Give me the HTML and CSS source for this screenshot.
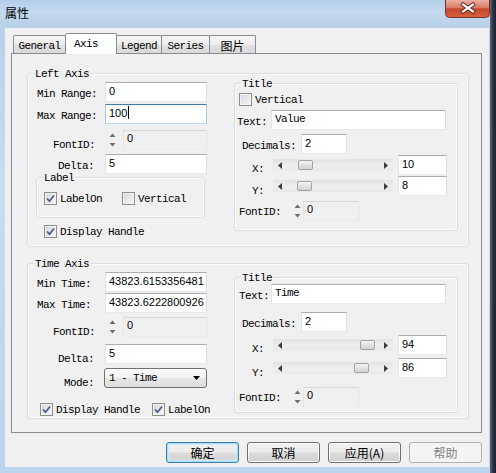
FILE: index.html
```html
<!DOCTYPE html>
<html>
<head>
<meta charset="utf-8">
<title>属性</title>
<link rel="stylesheet" href="styles.css">
</head>
<body>
<div class="screen">
  <div class="window">
    <div class="titlebar">
      <span class="title">属性</span>
      <div class="close">
        <svg width="45" height="18" viewBox="0 0 45 18">
          <defs>
            <linearGradient id="cg" x1="0" y1="0" x2="0" y2="1">
              <stop offset="0" stop-color="#eab0a3"/>
              <stop offset="0.45" stop-color="#d97b63"/>
              <stop offset="0.5" stop-color="#c4482c"/>
              <stop offset="1" stop-color="#d9603f"/>
            </linearGradient>
          </defs>
          <path d="M0.5 0 V13.5 A4 4 0 0 0 4.5 17.5 H40.5 A4 4 0 0 0 44.5 13.5 V0" fill="url(#cg)" stroke="#7a3328"/>
          <path d="M18 4.5 L28 11.5 M28 4.5 L18 11.5" stroke="#5a2018" stroke-width="4" stroke-linecap="square"/>
          <path d="M18 4.5 L28 11.5 M28 4.5 L18 11.5" stroke="#ffffff" stroke-width="2.2" stroke-linecap="square"/>
        </svg>
      </div>
    </div>
    <div class="client">
      <div class="tabs">
        <div class="tab t-general">General</div>
        <div class="tab sel t-axis">Axis</div>
        <div class="tab t-legend">Legend</div>
        <div class="tab t-series">Series</div>
        <div class="tab t-pic cjk">图片</div>
      </div>
      <div class="panel">
        <div class="group g-axis">
          <div class="legend">Left Axis</div>
          <div class="cols">
            <div class="lcol">
              <div class="row mt2"><span class="lb w77 p9">Min Range:</span><span class="edit w102">0</span></div>
              <div class="row mt2"><span class="lb w77 p9">Max Range:</span><span class="edit w102 focus">100<span class="caret"></span></span></div>
              <div class="row mt6"><span class="lb w77 p25 low4">FontID:</span><svg class="spin ml3" width="9" height="20" viewBox="0 0 9 20"><path d="M1.5 7 L4.5 3.5 L7.5 7Z" fill="#6f6f6f"/><path d="M1.5 13 L4.5 16.5 L7.5 13Z" fill="#6f6f6f"/></svg><span class="edit ro w84 ml6">0</span></div>
              <div class="row mt4"><span class="lb w77 p30">Delta:</span><span class="edit w102">5</span></div>
              <div class="group g-label">
                <div class="legend">Label</div>
                <div class="chkrow mt8 ml7">
                  <span class="cb"><svg width="11" height="11" viewBox="0 0 11 11"><path d="M2 5.5 L4.5 8.2 L9 2.5" fill="none" stroke="#4b5f8e" stroke-width="1.8"/></svg></span><span class="ct">LabelOn</span>
                  <span class="cb ml20"></span><span class="ct">Vertical</span>
                </div>
              </div>
              <div class="chkrow mt7 ml16">
                <span class="cb"><svg width="11" height="11" viewBox="0 0 11 11"><path d="M2 5.5 L4.5 8.2 L9 2.5" fill="none" stroke="#4b5f8e" stroke-width="1.8"/></svg></span><span class="ct">Display Handle</span>
              </div>
            </div>
            <div class="group g-title">
              <div class="legend">Title</div>
              <div class="chkrow mt3 ml4"><span class="cb"></span><span class="ct">Vertical</span></div>
              <div class="row mt4"><span class="lb tl p2">Text:</span><span class="edit m w175">Value</span></div>
              <div class="row mt4"><span class="lb dl">Decimals:</span><span class="edit w46">2</span></div>
              <div class="row mt1"><span class="lb xl low3">X:</span>
                <div class="slider"><span class="arr"><svg width="4" height="7" viewBox="0 0 4 7"><path d="M4 0V7L0 3.5Z" fill="#3c3c3c"/></svg></span><span class="thumb" style="margin-left:11px"></span><span class="grow"></span><span class="arr"><svg width="4" height="7" viewBox="0 0 4 7"><path d="M0 0V7L4 3.5Z" fill="#3c3c3c"/></svg></span></div>
                <span class="edit w49 ml5">10</span></div>
              <div class="row mt1"><span class="lb xl low4">Y:</span>
                <div class="slider"><span class="arr"><svg width="4" height="7" viewBox="0 0 4 7"><path d="M4 0V7L0 3.5Z" fill="#3c3c3c"/></svg></span><span class="thumb" style="margin-left:10px"></span><span class="grow"></span><span class="arr"><svg width="4" height="7" viewBox="0 0 4 7"><path d="M0 0V7L4 3.5Z" fill="#3c3c3c"/></svg></span></div>
                <span class="edit w49 ml5">8</span></div>
              <div class="row mt4 h21"><span class="lb fl">FontID:</span><svg class="spin" width="9" height="20" viewBox="0 0 9 20"><path d="M1.5 7 L4.5 3.5 L7.5 7Z" fill="#6f6f6f"/><path d="M1.5 13 L4.5 16.5 L7.5 13Z" fill="#6f6f6f"/></svg><span class="edit ro w56 ml1 h21">0</span></div>
            </div>
          </div>
        </div>

        <div class="group g-time">
          <div class="legend">Time Axis</div>
          <div class="cols">
            <div class="lcol">
              <div class="row mt2"><span class="lb w77 p9">Min Time:</span><span class="edit w102">43823.6153356481</span></div>
              <div class="row mt1"><span class="lb w77 p9">Max Time:</span><span class="edit w102">43823.6222800926</span></div>
              <div class="row mt3 h21"><span class="lb w77 p25 low5">FontID:</span><svg class="spin ml3" width="9" height="20" viewBox="0 0 9 20"><path d="M1.5 7 L4.5 3.5 L7.5 7Z" fill="#6f6f6f"/><path d="M1.5 13 L4.5 16.5 L7.5 13Z" fill="#6f6f6f"/></svg><span class="edit ro w84 ml6 h21">0</span></div>
              <div class="row mt7"><span class="lb w77 p30 low4">Delta:</span><span class="edit w102">5</span></div>
              <div class="row mt4"><span class="lb w77 p36 low4">Mode:</span><div class="select"><span>1 - Time</span><svg width="7" height="4" viewBox="0 0 7 4"><path d="M0 0H7L3.5 4Z" fill="#000"/></svg></div></div>
              <div class="chkrow mt15 ml12">
                <span class="cb"><svg width="11" height="11" viewBox="0 0 11 11"><path d="M2 5.5 L4.5 8.2 L9 2.5" fill="none" stroke="#4b5f8e" stroke-width="1.8"/></svg></span><span class="ct">Display Handle</span>
                <span class="cb ml12"><svg width="11" height="11" viewBox="0 0 11 11"><path d="M2 5.5 L4.5 8.2 L9 2.5" fill="none" stroke="#4b5f8e" stroke-width="1.8"/></svg></span><span class="ct">LabelOn</span>
              </div>
            </div>
            <div class="group g-title b">
              <div class="legend">Title</div>
              <div class="row"><span class="lb tl p4">Text:</span><span class="edit m w175">Time</span></div>
              <div class="row mt8"><span class="lb dl">Decimals:</span><span class="edit w46">2</span></div>
              <div class="row mt3"><span class="lb xl low3">X:</span>
                <div class="slider"><span class="arr"><svg width="4" height="7" viewBox="0 0 4 7"><path d="M4 0V7L0 3.5Z" fill="#3c3c3c"/></svg></span><span class="thumb" style="margin-left:73px"></span><span class="grow"></span><span class="arr"><svg width="4" height="7" viewBox="0 0 4 7"><path d="M0 0V7L4 3.5Z" fill="#3c3c3c"/></svg></span></div>
                <span class="edit w49 ml5">94</span></div>
              <div class="row mt3"><span class="lb xl low4">Y:</span>
                <div class="slider"><span class="arr"><svg width="4" height="7" viewBox="0 0 4 7"><path d="M4 0V7L0 3.5Z" fill="#3c3c3c"/></svg></span><span class="thumb" style="margin-left:67px"></span><span class="grow"></span><span class="arr"><svg width="4" height="7" viewBox="0 0 4 7"><path d="M0 0V7L4 3.5Z" fill="#3c3c3c"/></svg></span></div>
                <span class="edit w49 ml5">86</span></div>
              <div class="row mt8 h21"><span class="lb fl">FontID:</span><svg class="spin" width="9" height="20" viewBox="0 0 9 20"><path d="M1.5 7 L4.5 3.5 L7.5 7Z" fill="#6f6f6f"/><path d="M1.5 13 L4.5 16.5 L7.5 13Z" fill="#6f6f6f"/></svg><span class="edit ro w56 ml1 h21">0</span></div>
            </div>
          </div>
        </div>
      </div>
      <div class="buttons">
        <div class="btn def cjk">确定</div>
        <div class="btn cjk">取消</div>
        <div class="btn cjk">应用(A)</div>
        <div class="btn dis cjk">帮助</div>
      </div>
    </div>
  </div>
  <div class="shadow"></div>
</div>
</body>
</html>
```
FILE: styles.css
```css
* { box-sizing: border-box; margin: 0; padding: 0; }
html, body { width: 496px; height: 473px; overflow: hidden; }
body {
  font-family: "Liberation Mono", "Noto Sans CJK SC", monospace;
  font-size: 11px;
  letter-spacing: -0.6px;
  color: #000;
  background: #1f2633;
}
.cjk { font-family: "Noto Sans CJK SC", sans-serif; letter-spacing: 0; }

.screen { display: flex; width: 496px; height: 473px; }
.window {
  width: 490px; height: 473px;
  display: flex; flex-direction: column;
  background: linear-gradient(180deg, #b3cde9 0, #c4d9ef 12px, #b8d0ea 27px, #c9ddf1 180px, #bcd3ec 473px);
}
.shadow {
  width: 6px; height: 473px;
  background: linear-gradient(90deg, #5d6878, #2c3341 50%, #1b212c);
}
.titlebar { height: 28px; display: flex; align-items: flex-start; }
.title {
  font-family: "Noto Sans CJK SC", sans-serif; letter-spacing: 0;
  font-size: 12px; line-height: 16px; margin: 5px 0 0 5px;
}
.close { margin-left: auto; width: 45px; height: 18px; }
.close svg { display: block; }

.client {
  margin: 0 1px 0 5px; height: 439px;
  background: #f0f0f0;
  display: flex; flex-direction: column;
}

/* tabs */
.tabs {
  display: flex; align-items: flex-end; height: 25px; padding-left: 8px;
  position: relative; z-index: 1;
}
.tab {
  height: 18px; border: 1px solid #898c95; border-bottom: none;
  margin-left: -1px; text-align: center; line-height: 16px; padding-top: 2px;
  background: linear-gradient(#f6f6f6, #ededed 50%, #e1e1e1 51%, #d9d9d9);
  border-radius: 2px 2px 0 0;
}
.t-general { width: 53px; margin-left: 0; }
.t-axis { width: 52px; }
.t-legend { width: 46px; }
.t-series { width: 49px; }
.t-pic { width: 47px; font-size: 12px; line-height: 15px; }
.tab.sel {
  height: 21px; margin-bottom: -1px; background: #ffffff;
  text-align: left; padding: 0 0 0 8px; line-height: 20px;
}

.panel {
  margin-left: 6px; width: 471px; height: 380px;
  border: 1px solid #898c95; background: #f0f0f0;
}

/* group boxes */
.group {
  border: 1px solid #d5dfe5; border-radius: 3px;
  box-shadow: inset 0 0 0 1px #fbfbfb;
}
.legend {
  margin: -6px 0 0 6px; padding: 0 1px; height: 12px; line-height: 12px;
  background: #f0f0f0; width: max-content;
}
.g-axis { margin: 19px 0 0 15px; width: 442px; height: 174px; }
.g-time { margin: 16px 0 0 15px; width: 442px; height: 156px; }
.g-label { margin: 3px 0 0 8px; width: 169px; height: 41px; }
.g-title { width: 224px; height: 148px; margin-top: 3px; }
.g-title.b { height: 136px; margin-top: 7px; }

.cols { display: flex; }
.lcol { width: 206px; display: flex; flex-direction: column; }

.row { display: flex; align-items: center; height: 20px; }
.h21 { height: 21px; }
.lb { flex: none; white-space: pre; line-height: 20px; padding-top: 2px; align-self: flex-start; height: 20px; }
.low3 { padding-top: 4px; }
.low4 { padding-top: 5px; }
.low5 { padding-top: 6px; }
.w77 { width: 77px; }
.tl { width: 36px; }
.dl { width: 66px; padding-left: 7px; }
.xl { width: 38px; padding-left: 17px; }
.fl { width: 58px; padding-left: 4px; }
.p2 { padding-left: 2px; }
.p4 { padding-left: 4px; }
.p9 { padding-left: 9px; }
.p25 { padding-left: 25px; }
.p30 { padding-left: 30px; }
.p36 { padding-left: 36px; }

.mt1 { margin-top: 1px; } .mt2 { margin-top: 2px; } .mt3 { margin-top: 3px; }
.mt4 { margin-top: 4px; } .mt6 { margin-top: 6px; } .mt7 { margin-top: 7px; }
.mt8 { margin-top: 8px; } .mt15 { margin-top: 15px; }
.ml1 { margin-left: 1px; } .ml3 { margin-left: 3px; } .ml4 { margin-left: 4px; }
.ml5 { margin-left: 5px; } .ml6 { margin-left: 6px; } .ml7 { margin-left: 7px; }
.ml12 { margin-left: 12px; } .ml16 { margin-left: 16px; } .ml20 { margin-left: 20px; }

/* edits */
.edit {
  display: block; flex: none; height: 20px;
  background: #ffffff;
  border: 1px solid; border-color: #abadb3 #dbdfe6 #e3e9ef #e2e3ea;
  font-family: "Liberation Sans", sans-serif; letter-spacing: 0; font-size: 11px;
  line-height: 16px; padding: 0 2px 0 3px; white-space: nowrap; overflow: hidden;
}
.edit.m { font-family: "Liberation Mono", monospace; letter-spacing: -0.6px; }
.edit.focus { border-color: #3d7bad #a4c9e3 #b7d9ed #a4c9e3; }
.edit.ro { background: #f0f0f0; border-color: #d6d8dc #e4e5e8 #eaebee #e4e5e8; line-height: 14px; padding-left: 3px; }
.caret { display: inline-block; width: 1px; height: 13px; background: #000; vertical-align: -2px; margin-left: 1px; }
.w46 { width: 46px; } .w49 { width: 49px; } .w56 { width: 56px; }
.w84 { width: 84px; } .w102 { width: 102px; } .w175 { width: 175px; }

.spin { flex: none; display: block; }

/* checkboxes */
.chkrow { display: flex; align-items: center; height: 13px; }
.cb {
  flex: none; width: 13px; height: 13px;
  border: 1px solid #8e8f8f;
  background: linear-gradient(135deg, #d6d6d6, #f9f9f9);
  box-shadow: inset 0 0 0 1px #f2f2f2;
  display: flex; align-items: center; justify-content: center;
}
.cb svg { display: block; }
.ct { margin-left: 3px; white-space: pre; line-height: 13px; padding-top: 1px; }

/* slider (scroll-bar style) */
.slider {
  flex: none; width: 120px; height: 12px; display: flex; align-items: center;
  background: linear-gradient(#e2e2e2, #eeeeee 50%, #e9e9e9);
}
.arr { flex: none; width: 14px; display: flex; justify-content: center; }
.arr svg { display: block; }
.thumb {
  flex: none; width: 15px; height: 10px;
  border: 1px solid #a3a3a3; border-radius: 2px;
  background: linear-gradient(#f6f6f6, #e2e2e2 50%, #d2d2d2);
}
.grow { flex: 1; }

/* combo */
.select {
  flex: none; width: 103px; height: 20px; margin-left: -1px;
  border: 1px solid #707070; border-radius: 3px;
  background: linear-gradient(#fbfbfb, #f1f1f1 50%, #e6e6e6 51%, #dedede);
  display: flex; align-items: center; justify-content: space-between;
  padding: 0 6px 0 4px; white-space: pre;
}
.select svg { display: block; }

/* buttons */
.buttons { display: flex; justify-content: flex-end; gap: 8px; padding-right: 7px; margin-top: 9px; }
.btn {
  width: 73px; height: 21px;
  border: 1px solid #707070; border-radius: 3px;
  background: linear-gradient(#f2f2f2, #ebebeb 48%, #dddddd 52%, #cfcfcf);
  box-shadow: inset 0 0 0 1px #fbfbfb;
  font-size: 12px; line-height: 17px;
  display: flex; align-items: center; justify-content: center;
}
.btn.def { border-color: #3c7fb1; box-shadow: inset 0 0 0 1px #a6dcf7, inset 0 0 2px 2px #cdeefc; }
.btn.dis { border-color: #adb2b5; background: #f4f4f4; color: #838383; box-shadow: none; }
```
